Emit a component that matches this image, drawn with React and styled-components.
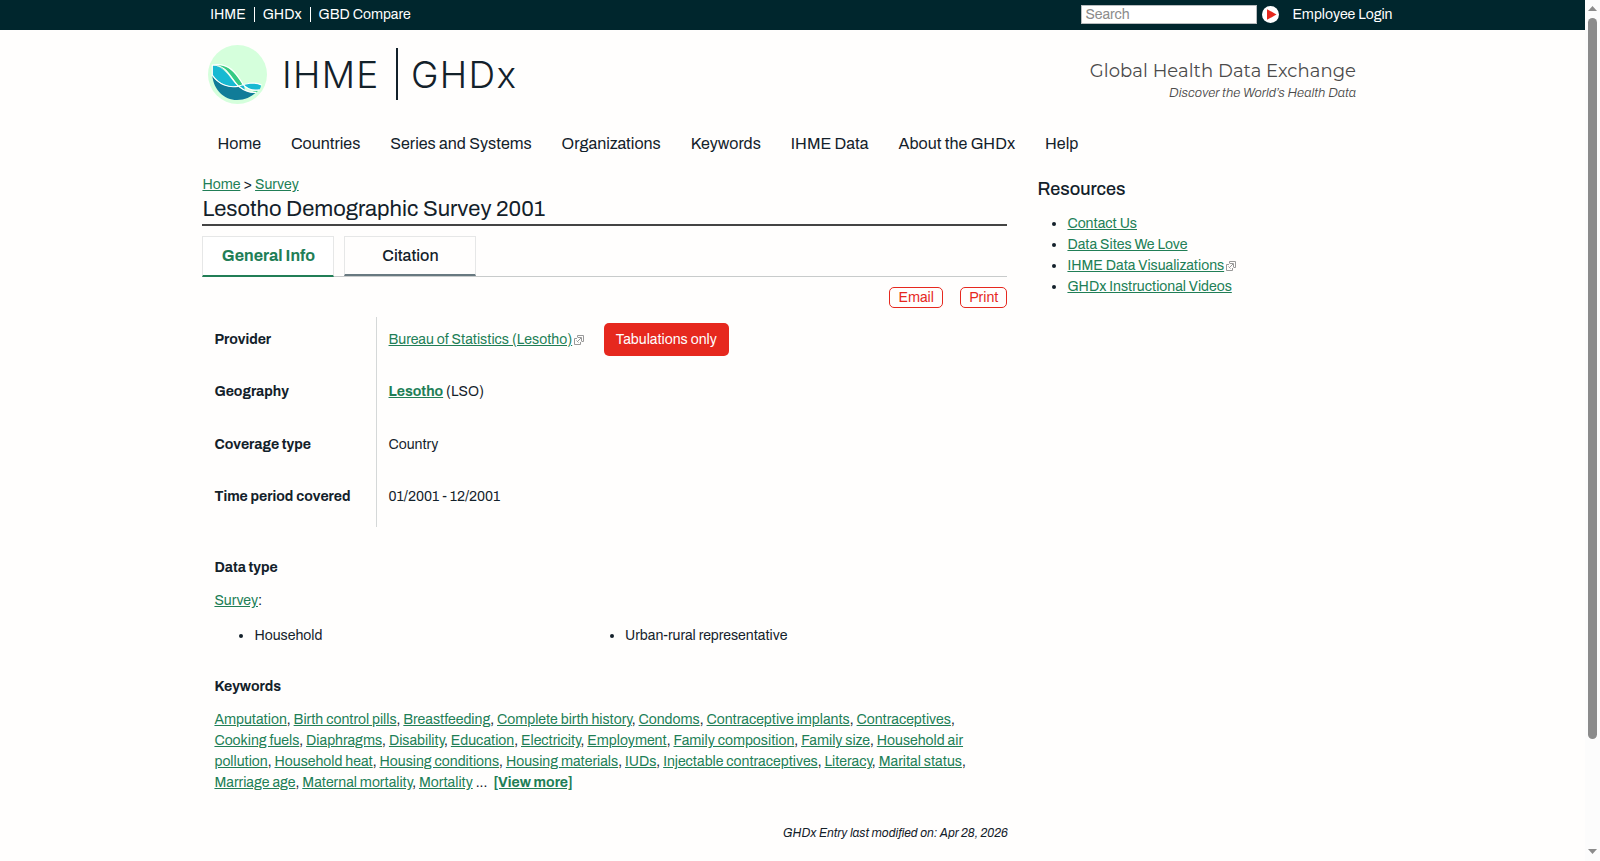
import React from 'react';
import styled, {createGlobalStyle, css} from 'styled-components';

const GlobalStyle = createGlobalStyle`
	* {
		box-sizing: border-box;
	}
	html, body {
		margin: 0;
		padding: 0;
		overflow: hidden;
	}
	body {
		background-color: #fffefd;
		color: #13212a;
		font-family: Archivo, "Liberation Sans", Arial, sans-serif;
		font-size: 14px;
		line-height: 21px;
	}
	ul {
		margin: 0;
		padding: 0;
	}
`;

const Screen = styled.div`
	display: flex;
	height: 861px;
	overflow: hidden;
`;

const Page = styled.div`
	flex: 1;
	min-width: 0;
`;

const TopBar = styled.div`
	display: flex;
	height: 30px;
	padding: 0 192.5px 0 202.3px;
	background-color: #00262d;
	color: #fff;
`;

const TopLinks = styled.nav`
	display: flex;
	flex: 1;
	align-items: flex-start;
	padding-top: 7px;
	a {
		height: 15px;
		padding: 0 8px;
		line-height: 15px;
		color: #fff;
		text-decoration: none;
	}
	a + a {
		border-left: 1px solid #fff;
	}
`;

const SearchForm = styled.form`
	display: flex;
	align-items: flex-start;
	gap: 5px;
	padding-top: 5px;
`;

const SearchInput = styled.input`
	width: 176px;
	height: 19px;
	padding: 0 3px;
	border: 1px solid #b9bdc0;
	border-radius: 0;
	background-color: #fff;
	font: 14px Archivo, "Liberation Sans", sans-serif;
	&::placeholder {
		color: #8b8b8b;
	}
`;

const Play = styled.svg`
	display: block;
	margin-top: 1px;
`;

const Login = styled.a`
	margin: 7px 0 0 13px;
	line-height: 15px;
	white-space: nowrap;
`;

const Header = styled.header`
	display: flex;
	justify-content: space-between;
	height: 90px;
	padding: 15px 229px 0 208px;
`;

const Brand = styled.div`
	display: flex;
	height: 59px;
`;

const BrandName = styled.span`
	margin-left: ${props => props.$left}px;
	width: ${props => props.$width}px;
	font-family: Inter, Roboto, sans-serif;
	font-weight: 300;
	font-size: 37px;
	line-height: 59px;
	letter-spacing: ${props => props.$spacing}px;
	white-space: nowrap;
`;

const BrandRule = styled.span`
	width: 2px;
	height: 52px;
	margin-top: 3px;
	background-color: #13212a;
`;

const Slogan = styled.div`
	padding-top: 14px;
	text-align: right;
	color: #4b4b4b;
`;

const SloganTitle = styled.div`
	font-family: Montserrat, Lato, sans-serif;
	font-size: 18px;
	line-height: 24px;
	letter-spacing: 0.08px;
`;

const SloganText = styled.div`
	font-size: 13px;
	font-style: italic;
	font-weight: 300;
	line-height: 20px;
	letter-spacing: 0.06px;
`;

const Nav = styled.nav`
	display: flex;
	height: 48px;
	padding-left: 202.5px;
`;

const NavLink = styled.a`
	padding: 0 15px;
	font-size: 16px;
	line-height: 48px;
	white-space: nowrap;
`;

const Columns = styled.div`
	display: flex;
	padding-left: 202.45px;
`;

const Main = styled.main`
	width: 805px;
	padding-top: 6px;
`;

const Link = styled.a`
	color: #217e56;
	text-decoration: underline;
	font-weight: ${props => props.$bold ? 'bold' : 'normal'};
`;

const Breadcrumb = styled.div`
	height: 21px;
`;

const Title = styled.h1`
	height: 31px;
	margin: 0;
	border-bottom: 2px solid #444;
	font-size: 22px;
	font-weight: normal;
	line-height: 29px;
`;

const Tabs = styled.div`
	display: flex;
	gap: 10px;
	height: 41px;
	margin-top: 10px;
	border-bottom: 1px solid #c8cbcb;
`;

const Tab = styled.div`
	width: 132px;
	height: 40px;
	border: 1px solid #e6e7e7;
	border-bottom: 2px solid #687980;
	font-size: 16px;
	font-weight: 500;
	line-height: 37px;
	text-align: center;
	${props => props.$active && css`
		height: 41px;
		border-bottom-color: #217e56;
		background-color: #fff;
		color: #217e56;
		font-weight: bold;
	`}
`;

const Actions = styled.div`
	display: flex;
	justify-content: flex-end;
	gap: 17.4px;
	margin-top: 10px;
`;

const ActionButton = styled.button`
	height: 21px;
	padding: 0 8px;
	border: 1px solid #e6281e;
	border-radius: 5px;
	background: none;
	color: #e6281e;
	font: 14px/18px Archivo, "Liberation Sans", sans-serif;
`;

const Info = styled.div`
	margin-top: 8.9px;
`;

const InfoRow = styled.div`
	display: flex;
	height: 52.5px;
`;

const InfoLabel = styled.div`
	width: 173.6px;
	padding: 12px 12px 0;
	font-weight: bold;
	white-space: nowrap;
`;

const InfoValue = styled.div`
	display: flex;
	align-items: flex-start;
	padding: 12px 12px 0 11.5px;
	border-left: 1px solid #d5d8d8;
	white-space: pre;
`;

const Tag = styled.span`
	height: 33px;
	margin: -6px 0 0 20.2px;
	padding: 0 12px;
	border-radius: 5px;
	background-color: #e6281e;
	color: #fff;
	line-height: 33.4px;
`;

const ExtSvg = styled.svg`
	margin-left: 1.5px;
	vertical-align: ${props => props.$inline ? '-1px' : 'baseline'};
	margin-top: ${props => props.$inline ? 0 : '6px'};
`;

const Section = styled.section`
	padding: 0 12px;
	margin-top: ${props => props.$top}px;
`;

const SectionTitle = styled.h2`
	margin: 0 0 12px;
	font-size: 14px;
	line-height: 21px;
`;

const TypeList = styled.ul`
	display: grid;
	grid-template-columns: 370.5px 1fr;
	margin-top: 14px;
	padding-left: 40px;
`;

const Modified = styled.div`
	margin: 30px -0.5px 0 0;
	text-align: right;
	font-size: 12px;
	font-style: italic;
`;

const Aside = styled.aside`
	margin-left: 30px;
	padding-top: 8px;
	ul {
		padding: 11px 0 0 30px;
	}
`;

const AsideTitle = styled.h2`
	margin: 0;
	font-size: 18px;
	font-weight: 500;
	line-height: 26px;
`;

const ScrollTrack = styled.div`
	display: flex;
	flex-direction: column;
	align-items: center;
	width: 15px;
	height: 861px;
	background-color: #fcfcfc;
`;

const ScrollThumb = styled.div`
	width: 9px;
	height: 721px;
	margin: 7px 0 110px;
	border-radius: 5px;
	background-color: #8b8b8b;
`;

const ScrollArrow = styled.svg`
	display: block;
	margin-top: ${props => props.$top}px;
`;

const ExternalIcon = ({inline}) => (
	<ExtSvg $inline={inline} width="10" height="10" viewBox="0 0 10 10" fill="none" stroke="#999">
		<path d="M3 3.500H.5v6h6V7"/>
		<path d="M3.500 2.500V.5h6v6H7.500"/>
		<path d="M2.500 5.500l2 2M3 7l4-4M4 2.500h3.500V6"/>
	</ExtSvg>
)

const LogoMark = () => (
	<svg width="59" height="59" viewBox="0 0 59 59">
		<circle cx="29.5" cy="29.5" r="29.5" fill="#d5ffdc"/>
		<path d="M4.300 31C6 45 16 55 29 55C37 55 43 52 48 47.500C41 48 35 45 30 41.300C20 43 10 39 4.300 31Z" fill="#107c98"/>
		<path d="M7 20C20 19 28 28 35 39.300L30.500 41C25 35 20 24 7 20Z" fill="#36ca84"/>
		<path d="M4.300 20C17 21 22 34 30 41C19 43 9 37 4.300 30Z" fill="#18b9d2"/>
		<path d="M31 41C38 38 46 37 53 40C53 42 52 44 51 45C44 46 40 43.500 36 40.500L37 45.500Z" fill="#18b9d2"/>
		<path d="M44.500 46.500L50 45.800L48 48Z" fill="#36ca84"/>
		<path d="M4.300 31V20C20 20 23 35 31 41.500C36 45.500 42 48 48.500 47.300M4.300 20C21 17 28 28 35 39.300C39 44 45 46 51.500 44.800M4.300 30C11 40 21 43 30 41.300C37 39 46 36 53.500 40" fill="none" stroke="#fff" strokeWidth="1.200"/>
	</svg>
)

const navItems = ['Home', 'Countries', 'Series and Systems', 'Organizations', 'Keywords', 'IHME Data', 'About the GHDx', 'Help'];

const keywords = [
	'Amputation', 'Birth control pills', 'Breastfeeding', 'Complete birth history', 'Condoms',
	'Contraceptive implants', 'Contraceptives', 'Cooking fuels', 'Diaphragms', 'Disability',
	'Education', 'Electricity', 'Employment', 'Family composition', 'Family size',
	'Household air pollution', 'Household heat', 'Housing conditions', 'Housing materials',
	'IUDs', 'Injectable contraceptives', 'Literacy', 'Marital status', 'Marriage age',
	'Maternal mortality', 'Mortality'
];

const resources = [
	{label: 'Contact Us'},
	{label: 'Data Sites We Love'},
	{label: 'IHME Data Visualizations', external: true},
	{label: 'GHDx Instructional Videos'}
];

const SiteTop = () => {
	return (
		<>
			<TopBar>
				<TopLinks>
					<a>IHME</a>
					<a>GHDx</a>
					<a>GBD Compare</a>
				</TopLinks>
				<SearchForm>
					<SearchInput type="text" placeholder="Search"/>
					<Play width="17" height="17" viewBox="0 0 17 17">
						<circle cx="8.5" cy="8.5" r="8.5" fill="#fff"/>
						<path d="M5 3.200L14.500 8.500L5 13.800Z" fill="#e6281e"/>
					</Play>
				</SearchForm>
				<Login>Employee Login</Login>
			</TopBar>
			<Header>
				<Brand>
					<LogoMark/>
					<BrandName $left={15} $width={114} $spacing={1.3}>IHME</BrandName>
					<BrandRule/>
					<BrandName $left={13} $width={110} $spacing={1.3}>GHDx</BrandName>
				</Brand>
				<Slogan>
					<SloganTitle>Global Health Data Exchange</SloganTitle>
					<SloganText>Discover the World’s Health Data</SloganText>
				</Slogan>
			</Header>
			<Nav>
				{navItems.map(item => <NavLink key={item}>{item}</NavLink>)}
			</Nav>
		</>
	)
}

const Record = () => {
	return (
		<Main>
			<Breadcrumb><Link>Home</Link> &gt; <Link>Survey</Link></Breadcrumb>
			<Title>Lesotho Demographic Survey 2001</Title>
			<Tabs>
				<Tab $active>General Info</Tab>
				<Tab>Citation</Tab>
			</Tabs>
			<Actions>
				<ActionButton>Email</ActionButton>
				<ActionButton>Print</ActionButton>
			</Actions>
			<Info>
				<InfoRow>
					<InfoLabel>Provider</InfoLabel>
					<InfoValue>
						<Link>Bureau of Statistics (Lesotho)</Link>
						<ExternalIcon/>
						<Tag>Tabulations only</Tag>
					</InfoValue>
				</InfoRow>
				<InfoRow>
					<InfoLabel>Geography</InfoLabel>
					<InfoValue><Link $bold>Lesotho</Link> (LSO)</InfoValue>
				</InfoRow>
				<InfoRow>
					<InfoLabel>Coverage type</InfoLabel>
					<InfoValue>Country</InfoValue>
				</InfoRow>
				<InfoRow>
					<InfoLabel>Time period covered</InfoLabel>
					<InfoValue>01/2001 - 12/2001</InfoValue>
				</InfoRow>
			</Info>
			<Section $top={30.1}>
				<SectionTitle>Data type</SectionTitle>
				<Link>Survey</Link>:
				<TypeList>
					<li>Household</li>
					<li>Urban-rural representative</li>
				</TypeList>
			</Section>
			<Section $top={30}>
				<SectionTitle>Keywords</SectionTitle>
				{keywords.map((word, i) => (
					<React.Fragment key={word}>
						<Link>{word}</Link>{i < keywords.length - 1 ? ', ' : ' ... \u00a0'}
					</React.Fragment>
				))}
				<Link $bold>[View more]</Link>
			</Section>
			<Modified>GHDx Entry last modified on: Apr 28, 2026</Modified>
		</Main>
	)
}

const Resources = () => {
	return (
		<Aside>
			<AsideTitle>Resources</AsideTitle>
			<ul>
				{resources.map(({label, external}) => (
					<li key={label}>
						<Link>{label}</Link>{external ? <ExternalIcon inline/> : null}
					</li>
				))}
			</ul>
		</Aside>
	)
}

const Scrollbar = () => {
	return (
		<ScrollTrack>
			<ScrollArrow $top={6} width="9" height="5" viewBox="0 0 9 5">
				<path d="M4.500 0L9 5H0Z" fill="#8b8b8b"/>
			</ScrollArrow>
			<ScrollThumb/>
			<ScrollArrow $top={0} width="9" height="5" viewBox="0 0 9 5">
				<path d="M0 0H9L4.500 5Z" fill="#8b8b8b"/>
			</ScrollArrow>
		</ScrollTrack>
	)
}

function App() {
	return (
		<Screen>
			<GlobalStyle/>
			<Page>
				<SiteTop/>
				<Columns>
					<Record/>
					<Resources/>
				</Columns>
			</Page>
			<Scrollbar/>
		</Screen>
	);
}

export default App;
